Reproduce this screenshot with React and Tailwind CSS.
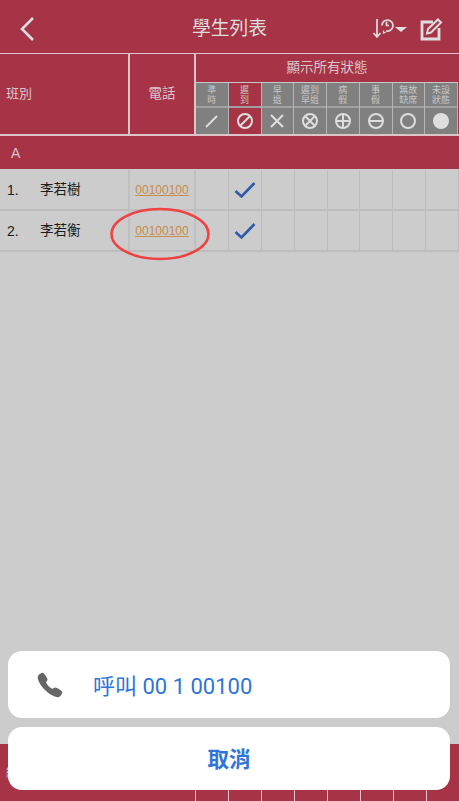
import { IoCall } from 'react-icons/io5'

const statuses = [
  { label: ['準', '時'], icon: 'slash' },
  { label: ['遲', '到'], icon: 'ban', active: true },
  { label: ['早', '退'], icon: 'x' },
  { label: ['遲到', '早退'], icon: 'circleX' },
  { label: ['病', '假'], icon: 'plus' },
  { label: ['事', '假'], icon: 'minus' },
  { label: ['無故', '缺席'], icon: 'ring' },
  { label: ['未設', '狀態'], icon: 'dot' },
]

const students = [
  { no: '1.', name: '李若樹', phone: '00100100' },
  { no: '2.', name: '李若衡', phone: '00100100' },
]

function StatusIcon({ type }) {
  return (
    <svg width="20" height="20" viewBox="0 0 20 20" fill="none" stroke="#dedede" strokeWidth="2">
      {type === 'slash' && <path d="M4 16 15 5" />}
      {type === 'ban' && (
        <>
          <circle cx="10" cy="10" r="7" />
          <path d="M5 15 15 5" />
        </>
      )}
      {type === 'x' && <path d="M4 4l12 12M16 4 4 16" />}
      {type === 'circleX' && (
        <>
          <circle cx="10" cy="10" r="7" />
          <path d="M5.5 5.5l9 9M14.5 5.5l-9 9" />
        </>
      )}
      {type === 'plus' && (
        <>
          <circle cx="10" cy="10" r="7" />
          <path d="M3 10h14M10 3v14" />
        </>
      )}
      {type === 'minus' && (
        <>
          <circle cx="10" cy="10" r="7" />
          <path d="M3 10h14" />
        </>
      )}
      {type === 'ring' && <circle cx="10" cy="10" r="7" />}
      {type === 'dot' && <circle cx="10" cy="10" r="8" fill="#dedede" stroke="none" />}
    </svg>
  )
}

function Check() {
  return (
    <svg width="22" height="18" viewBox="0 0 22 18" fill="none" stroke="#2f5aa8" strokeWidth="2.6">
      <path d="M1.5 10 7.5 15.5 20.5 2" />
    </svg>
  )
}

function StudentRow({ student }) {
  return (
    <div className="flex h-[41px] border-b-2 border-[#bdbdbd]">
      <div className="flex w-[130px] items-center border-r-2 border-[#c0c0c0] pt-[2px] text-[#1c1c1c]">
        <span className="w-[40px] pl-[7px] text-[14px]">{student.no}</span>
        <span className="text-[13.5px]">{student.name}</span>
      </div>
      <div className="flex w-[66px] items-center justify-center border-r-2 border-[#c0c0c0] pt-px text-[12px] text-[#c68d4f] underline">
        {student.phone}
      </div>
      {statuses.map((s, i) => (
        <div key={i} className="flex flex-1 items-center justify-center border-r border-[#bcbcbc] pt-px">
          {s.active && <Check />}
        </div>
      ))}
    </div>
  )
}

export default function App() {
  return (
    <div
      className="relative flex h-[801px] w-[459px] flex-col overflow-hidden bg-[#cccccc]"
      style={{ fontFamily: '"Liberation Sans", "Noto Sans CJK TC", sans-serif' }}
    >
      {/* top bar */}
      <div className="relative flex h-[54px] items-center justify-center border-b border-[#dcc4c8] bg-[#a63446] pt-[5px]">
        <svg className="absolute left-[19px] top-[17px]" width="16" height="24" viewBox="0 0 16 24" fill="none" stroke="#dedede" strokeWidth="2.6">
          <path d="M14 1 3 12 14 23" />
        </svg>
        <span className="text-[18.75px] text-[#dedede]">學生列表</span>
        <svg className="absolute left-[372px] top-[17px]" width="36" height="22" viewBox="0 0 36 22" fill="none" stroke="#dedede" strokeWidth="1.7">
          <path d="M5 2v18M1.5 16l3.5 4 3.5-4" />
          <path d="M10 8.5a5.5 5.5 0 1 1 4 5.3" />
          <path d="M14.5 4.5v4h2.5" />
          <path d="M11.5 13.5v2.5l2.5-1" strokeWidth="1.2" />
          <path d="M23 10h12l-6 5z" fill="#dedede" stroke="none" />
        </svg>
        <svg className="absolute left-[419px] top-[17px]" width="24" height="24" viewBox="0 0 24 24" fill="none" stroke="#dedede" strokeWidth="2.8">
          <path d="M14 5H3v17h17V11" />
          <path d="M9 12 19 2.5l3 3-10 10-4 1z" strokeWidth="2" />
        </svg>
      </div>

      {/* table head */}
      <div className="flex h-[82px] border-b-2 border-[#dcc4c8] bg-[#a63446] text-[#dcc4c8]">
        <div className="flex w-[130px] items-center border-r-2 border-[#dcc4c8] pl-[6px] text-[13px]">班別</div>
        <div className="flex w-[66px] items-center justify-center border-r-2 border-[#dcc4c8] text-[13.5px]">電話</div>
        <div className="flex flex-1 flex-col pr-px">
          <div className="flex h-[28px] items-center justify-center text-[13.5px]">顯示所有狀態</div>
          <div className="flex flex-1 border-t border-[#c9c9c9]">
            {statuses.map((s, i) => (
              <div
                key={i}
                className={`flex flex-1 flex-col border-r border-[#b5b5b5] ${s.active ? 'bg-[#a63446]' : 'bg-[#808080]'}`}
              >
                <div className="flex h-[25px] flex-col items-center justify-center border-b-2 border-[#a0a0a0] text-[9px] leading-[10px] text-[#c8c8c8]">
                  <span>{s.label[0]}</span>
                  <span>{s.label[1]}</span>
                </div>
                <div className="flex flex-1 items-center justify-center">
                  <StatusIcon type={s.icon} />
                </div>
              </div>
            ))}
          </div>
        </div>
      </div>

      {/* group */}
      <div className="flex h-[33px] items-center bg-[#a63446] pl-[11px] pt-px text-[14px] text-[#dcc4c8]">A</div>

      <div className="mt-px flex flex-col">
        {students.map((s) => (
          <StudentRow key={s.no} student={s} />
        ))}
      </div>

      {/* footer behind the sheet */}
      <div className="mt-auto flex h-[57px] flex-col bg-[#a63446] text-[#dcc4c8]">
        <div className="flex-1 pl-[6px] pt-[18px] text-[13px]">統計</div>
        <div className="flex h-[11px]">
          <div className="w-[195px]" />
          {[0, 1, 2, 3, 4, 5, 6, 7].map((i) => (
            <div key={i} className="flex-1 border-l border-[#dcc4c8]" />
          ))}
        </div>
      </div>

      {/* circled phone number */}
      <svg className="absolute left-[110px] top-[207px]" width="100" height="54" viewBox="0 0 100 54" fill="none" stroke="#ef4242" strokeWidth="2.5">
        <ellipse cx="50" cy="27" rx="48.5" ry="25" />
      </svg>

      {/* action sheet */}
      <div className="absolute bottom-[11px] left-2 flex w-[442px] flex-col gap-[9px]">
        <div className="flex h-[67px] items-center rounded-[14px] bg-white pl-[28px]">
          <IoCall className="h-[28px] w-[28px] text-[#666666]" />
          <span
            className="ml-[29px] pt-[3px] text-[22px] text-[#2f74d8]"
            style={{ fontFamily: 'Roboto, "Noto Sans CJK TC", sans-serif' }}
          >
            呼叫 00 1 00100
          </span>
        </div>
        <div className="flex h-[63px] items-center justify-center rounded-[14px] bg-white pt-[3px] text-[21.5px] font-semibold text-[#2f74d8]">
          取消
        </div>
      </div>
    </div>
  )
}
